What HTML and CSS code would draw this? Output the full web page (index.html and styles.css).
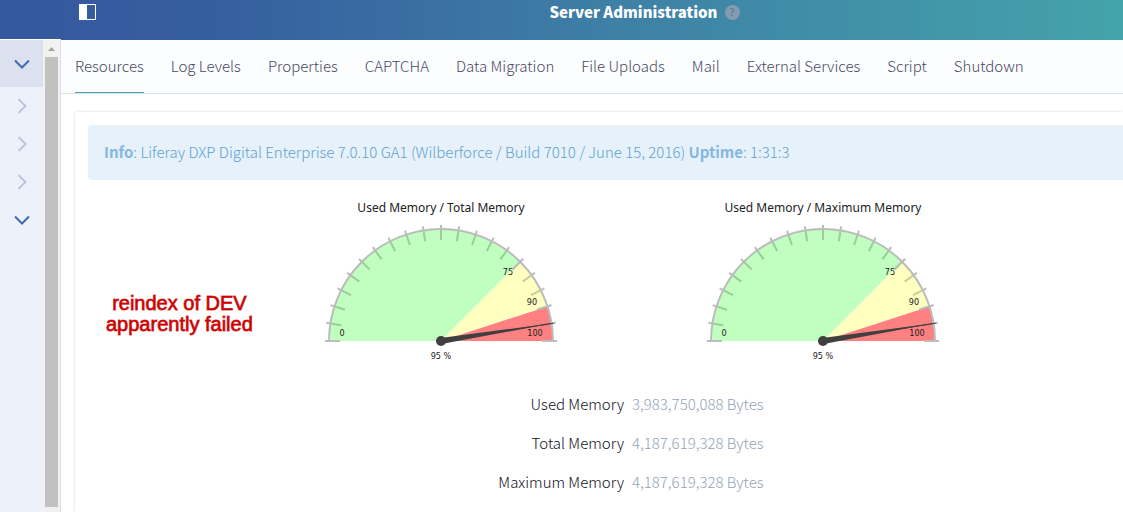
FILE: index.html
```html
<!DOCTYPE html>
<html lang="en">
<head>
<meta charset="utf-8">
<title>Server Administration</title>
<link rel="stylesheet" href="styles.css">
</head>
<body>
<header class="topbar">
  <button class="menu-toggle" type="button" aria-label="Toggle product menu">
    <svg width="17" height="16" viewBox="0 0 17 16"><path fill="#fff" fill-rule="evenodd" d="M0 0H17V16H0ZM8 1V15H16V1Z"/></svg>
  </button>
  <h1 class="title">Server Administration</h1>
  <button class="help" type="button" aria-label="Help">?</button>
</header>
<div class="layout">
  <aside class="sidebar">
    <nav class="side-nav" aria-label="Product menu">
      <button class="side-item active" type="button" aria-label="Control panel"><svg width="16" height="10" viewBox="0 0 16 10"><path class="chevron-open" d="M1 1.5L8 8.5L15 1.5"/></svg></button>
      <button class="side-item" type="button" aria-label="Users"><svg width="10" height="16" viewBox="0 0 10 16"><path class="chevron" d="M1.5 1L8.5 8L1.5 15"/></svg></button>
      <button class="side-item" type="button" aria-label="Sites"><svg width="10" height="16" viewBox="0 0 10 16"><path class="chevron" d="M1.5 1L8.5 8L1.5 15"/></svg></button>
      <button class="side-item" type="button" aria-label="Apps"><svg width="10" height="16" viewBox="0 0 10 16"><path class="chevron" d="M1.5 1L8.5 8L1.5 15"/></svg></button>
      <button class="side-item" type="button" aria-label="Configuration"><svg width="16" height="10" viewBox="0 0 16 10"><path class="chevron-open" d="M1 1.5L8 8.5L15 1.5"/></svg></button>
    </nav>
    <div class="scrollbar">
      <svg class="scroll-up" width="7" height="4" viewBox="0 0 7 4"><path fill="#a3a3a3" d="M0 4L3.5 0L7 4Z"/></svg>
      <div class="thumb"></div>
    </div>
  </aside>
  <main class="content">
    <nav class="tabs" aria-label="Server administration">
      <a class="tab current" href="#resources">Resources</a>
      <a class="tab" href="#log-levels">Log Levels</a>
      <a class="tab" href="#properties">Properties</a>
      <a class="tab" href="#captcha">CAPTCHA</a>
      <a class="tab" href="#data-migration">Data Migration</a>
      <a class="tab" href="#file-uploads">File Uploads</a>
      <a class="tab" href="#mail">Mail</a>
      <a class="tab" href="#external-services">External Services</a>
      <a class="tab" href="#script">Script</a>
      <a class="tab" href="#shutdown">Shutdown</a>
    </nav>
    <section class="card" id="resources">
      <p class="info"><strong>Info</strong>: Liferay DXP Digital Enterprise 7.0.10 GA1 (Wilberforce / Build 7010 / June 15, 2016) <strong>Uptime</strong>: 1:31:3</p>
      <div class="usage">
        <div class="gauges">
          <figure class="gauge" data-gauge><figcaption>Used Memory / Total Memory</figcaption></figure>
          <figure class="gauge" data-gauge><figcaption>Used Memory / Maximum Memory</figcaption></figure>
        </div>
        <table class="memory">
          <tr><th scope="row">Used Memory</th><td>3,983,750,088 Bytes</td></tr>
          <tr><th scope="row">Total Memory</th><td>4,187,619,328 Bytes</td></tr>
          <tr><th scope="row">Maximum Memory</th><td>4,187,619,328 Bytes</td></tr>
        </table>
      </div>
      <p class="note">reindex of DEV<br>apparently failed</p>
    </section>
  </main>
</div>
<script src="gauge.js"></script>
</body>
</html>
```
FILE: styles.css
```css
* { box-sizing: border-box; }

body {
  margin: 0;
  min-height: 100vh;
  display: flex;
  flex-direction: column;
  background: #fff;
  color: #10111c;
  font: 300 15px/20px "Noto Sans CJK SC", "Noto Sans", sans-serif;
}

button {
  padding: 0;
  border: 0;
  background: none;
  display: flex;
  align-items: center;
  justify-content: center;
}

.topbar {
  display: grid;
  grid-template-columns: 1fr auto 1fr;
  column-gap: 7px;
  align-items: center;
  height: 40px;
  padding: 0 0 16px 144px;
  background: linear-gradient(90deg, #34599d 0%, #365f9f 20%, #3e80a6 55%, #44a3aa 100%);
}

.menu-toggle { justify-self: start; margin-left: -65px; }

.title {
  margin: 0;
  color: #fff;
  font-size: 15px;
  line-height: 20px;
  font-weight: 900;
}

.help {
  width: 15px;
  height: 15px;
  border-radius: 50%;
  background: #869bb0;
  color: #5485a3;
  font: bold 10px/15px "Noto Sans", sans-serif;
}

.layout { flex: 1; display: flex; }

.sidebar {
  flex: none;
  display: flex;
  width: 61px;
  margin-top: -1px;
  border-top: 1px solid #fff;
  border-right: 1px solid #d6dff0;
}

.side-nav {
  flex: 1;
  display: flex;
  flex-direction: column;
  background: #edf1fa;
}

.side-item { height: 38px; width: 100%; padding-left: 1px; }
.side-item.active { height: 47px; background: #dbe1ef; }
.chevron, .chevron-open { fill: none; stroke: #b9c4df; stroke-width: 2; }
.chevron-open { stroke: #416aad; }

.scrollbar {
  width: 17px;
  padding: 7px 2px 5px;
  display: flex;
  flex-direction: column;
  gap: 6px;
  background: #f1f1f1;
}

.scroll-up { align-self: center; }
.thumb { flex: 1; background: #c1c1c1; }

.content {
  flex: 1;
  min-width: 0;
  display: flex;
  flex-direction: column;
}

.tabs {
  display: flex;
  gap: 27px;
  padding: 0 14px;
  border-bottom: 1px solid #dfe1e9;
  background: #fcfdfe;
}

.tab {
  padding: 16px 0;
  border-bottom: 1px solid transparent;
  color: #484962;
  text-decoration: none;
  white-space: nowrap;
}

.tab.current { border-color: #3fa5ab; }

.card {
  flex: 1;
  position: relative;
  margin: 18px 0 0 14px;
  padding: 13px 0 0 13px;
  border-radius: 2px 0 0 0;
  box-shadow: 0 0 3px rgba(0, 0, 0, 0.18);
}

.info {
  margin: 0;
  padding: 17px 16px 18px;
  border-radius: 4px 0 0 4px;
  background: #e6f1fa;
  color: #60a2d2;
}

.info strong { font-weight: 700; color: #84b8de; }

.usage { padding-left: 53px; }

.gauges {
  display: flex;
  justify-content: center;
  gap: 142px;
  padding-top: 20px;
}

.gauge {
  margin: 0;
  width: 240px;
  display: flex;
  flex-direction: column;
  align-items: center;
}

.gauge figcaption {
  color: #222;
  font: 12px/16px "Noto Sans", sans-serif;
  white-space: nowrap;
}

.gauge svg { display: block; }
.gauge-label { font: 9px "DejaVu Sans Condensed", "DejaVu Sans", sans-serif; fill: #222; text-anchor: middle; }
.rim { fill: none; stroke: #bcbcbc; stroke-width: 2; }
.tick { stroke: rgba(70, 70, 70, 0.28); stroke-width: 2; }
.tick-major { stroke: #bcbcbc; stroke-width: 2; }

.memory {
  width: 100%;
  margin-top: 18px;
  table-layout: fixed;
  border-spacing: 0;
}

.memory th, .memory td { width: 50%; height: 39px; padding: 0; }
.memory th { padding-right: 8px; text-align: right; font-weight: 300; }
.memory td { color: #94a3b4; }

.note {
  position: absolute;
  left: 31px;
  top: 181px;
  margin: 0;
  text-align: center;
  color: #c00;
  font: 20px/21px "Liberation Sans", Arial, sans-serif;
  -webkit-text-stroke: 1px rgba(204, 0, 0, 0.7);
}
```
FILE: gauge.js
```javascript
const CX = 120, CY = 125, R = 112;

function point(percent, radius) {
  const a = Math.PI * (1 - percent / 100);
  return (CX + radius * Math.cos(a)).toFixed(2) + " " + (CY - radius * Math.sin(a)).toFixed(2);
}

function sector(from, to, color) {
  return `<path fill="${color}" d="M${CX} ${CY}L${point(from, R)}A${R} ${R} 0 0 1 ${point(to, R)}Z"/>`;
}

function label(x, y, text) {
  return `<text class="gauge-label" x="${x}" y="${y}">${text}</text>`;
}

function drawGauge(value) {
  let out = sector(0, 75, "#c0ffc0") + sector(75, 90, "#ffffc0") + sector(90, 100, "#ff8080");
  for (let p = 5; p < 100; p += 5) {
    out += `<path class="tick" d="M${point(p, 101)}L${point(p, R)}"/>`;
    out += `<path class="tick-major" d="M${point(p, R)}L${point(p, 116)}"/>`;
  }
  for (const p of [0, 75, 90, 100]) {
    out += `<path class="tick-major" d="M${point(p, 101)}L${point(p, 116)}"/>`;
  }
  out += `<path class="rim" d="M${point(0, R)}A${R} ${R} 0 0 1 ${point(100, R)}"/>`;
  out += label(21, 120, "0") + label(187, 59, "75") + label(211, 89, "90") + label(214, 120, "100");
  out += `<path fill="#404040" d="M${point(value + 50, 3)}L${point(value, 116)}L${point(value - 50, 3)}Z"/>`;
  out += `<path stroke="#404040" d="M${CX} ${CY}L${point(value, 114)}"/>`;
  out += `<circle cx="${CX}" cy="${CY}" r="5" fill="#404040"/>`;
  out += label(CX, 143, value + " %");
  return `<svg width="240" height="150" viewBox="0 0 240 150">${out}</svg>`;
}

document.querySelectorAll("[data-gauge]").forEach((el) => {
  el.insertAdjacentHTML("beforeend", drawGauge(95));
});
```
